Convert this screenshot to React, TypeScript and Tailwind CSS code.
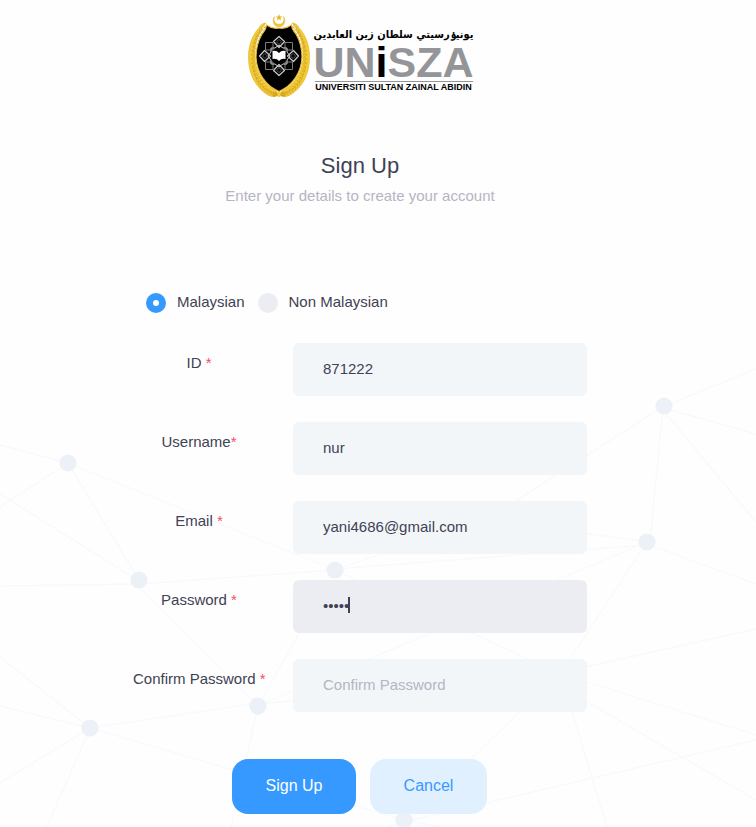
import { useState } from "react";

type Point = [number, number];

const nodes: Point[] = [
  [68, 463], [139, 580], [335, 570], [258, 706], [90, 728], [664, 406], [647, 542], [404, 820],
];

const edges: [Point, Point][] = [
  [[0, 445], [68, 463]], [[0, 507], [68, 463]], [[68, 463], [139, 580]], [[68, 463], [335, 570]],
  [[0, 494], [139, 581]], [[0, 586], [139, 584]], [[139, 584], [335, 570]], [[139, 587], [258, 706]],
  [[258, 706], [335, 570]], [[90, 728], [0, 657]], [[90, 728], [0, 706]], [[90, 728], [0, 783]],
  [[90, 728], [47, 827]], [[90, 728], [258, 703]], [[90, 728], [404, 820]], [[258, 706], [231, 827]],
  [[258, 706], [647, 542]], [[258, 704], [558, 677]], [[335, 570], [558, 673]], [[335, 570], [500, 512]],
  [[335, 569], [647, 545]], [[500, 511], [664, 406]], [[500, 521], [647, 542]], [[558, 677], [647, 542]],
  [[558, 673], [756, 629]], [[558, 673], [756, 735]], [[558, 685], [756, 800]], [[558, 665], [607, 827]],
  [[558, 674], [404, 825]], [[664, 406], [756, 369]], [[664, 408], [756, 434]], [[664, 411], [756, 522]],
  [[663, 406], [650, 542]], [[647, 544], [756, 584]], [[404, 822], [756, 740]], [[404, 820], [440, 827]],
  [[404, 822], [386, 827]],
];

function NetworkBackdrop() {
  return (
    <svg aria-hidden="true" viewBox="0 0 756 827" preserveAspectRatio="xMidYMin slice" className="absolute inset-0 -z-10 size-full">
      <g stroke="#f7f9fb" strokeWidth="1.3">
        {edges.map(([a, b], i) => (
          <line key={i} x1={a[0]} y1={a[1]} x2={b[0]} y2={b[1]} />
        ))}
      </g>
      <g fill="#ecf1f8">
        {nodes.map(([x, y]) => (
          <circle key={x} cx={x} cy={y} r="8.6" />
        ))}
      </g>
    </svg>
  );
}

// Herringbone strokes that run along the left half of the wreath.
const chevrons = Array.from({ length: 22 }, (_, i) => {
  const t = ((122 + i * 6.6) * Math.PI) / 180;
  const x = 31 + 27 * Math.cos(t);
  const y = 45 - 36 * Math.sin(t);
  const heading = (Math.atan2(36 * Math.cos(t), 27 * Math.sin(t)) * 180) / Math.PI;
  return { x, y, heading };
});

function Laurel() {
  return (
    <g>
      <path
        d="M18 10C15 13 13.500 15 12.500 19C8 26 6.500 34 7 46C7.500 60 17 73 28 78L30 82C27 84 24 84 20 82C8 75 1 62 .5 46C0 32 5 21 11 15C12 12 15 10 18 10Z"
        fill="#f2ca36"
        stroke="#e0b226"
        strokeWidth=".6"
      />
      <g stroke="#c99a1a" strokeWidth=".5" fill="none">
        {chevrons.map((c, i) => (
          <path key={i} d="M-2.600 -2L0 .8L2.600 -2M0 .8V-2.500" transform={`translate(${c.x} ${c.y}) rotate(${-c.heading})`} />
        ))}
      </g>
    </g>
  );
}

function Emblem() {
  return (
    <svg viewBox="0 0 64 86" className="h-[86px] w-16 shrink-0" role="img" aria-label="University crest">
      <Laurel />
      <g transform="translate(62 0) scale(-1 1)">
        <Laurel />
      </g>
      <path
        d="M31 15C36 16 40 14.500 43.500 12C44 16 46 19 48 21C52 28 54 36 54 44C53.500 60 44 73 31 78.500C18 73 8.500 60 8 44C8 36 10 28 14 21C16 19 18 16 18.500 12C22 14.500 26 16 31 15Z"
        fill="#000"
        stroke="#e8bc30"
        strokeWidth="1.2"
      />
      <path d="M26.500 3.500C24 7 25 13.800 31 13.800C37 13.800 38 7 35.500 3.500C36.800 8 35 11.200 31 11.200C27 11.200 25.200 8 26.500 3.500Z" fill="#f0c52e" stroke="#e6b828" strokeWidth=".5" />
      <path d="M31 1L31.900 3.400L34.400 3.500L32.400 5.100L33.100 7.500L31 6.100L28.900 7.500L29.600 5.100L27.600 3.500L30.100 3.400Z" fill="#e8b420" />
      <path d="M25 83L37 79.500M37 83L25 79.500" stroke="#d6a51c" strokeWidth="2.200" />
      <rect x="29.500" y="79" width="3" height="5" fill="#f3d04a" />
      <g fill="none" strokeLinejoin="round" transform="translate(31 43)">
        {[0, 90, 180, 270].map((a) => (
          <g key={a} transform={`rotate(${a})`}>
            <path d="M6 -13.500H13.500V-6H6Z" stroke="#7d7d7d" strokeWidth="1" />
            <path d="M0 -19.500L5.500 -14.500L0 -8.500L-5.500 -14.500Z" stroke="#c8c8c8" strokeWidth="1.200" />
            <path d="M0 -16.500L2.500 -14.300L0 -11.500L-2.500 -14.300Z" stroke="#666" strokeWidth=".8" />
          </g>
        ))}
        <path d="M0 -11L4 -8H8V-4L11 0L8 4V8H4L0 11L-4 8H-8V4L-11 0L-8 -4V-8H-4Z" stroke="#c9c9c9" strokeWidth="1" />
      </g>
      <path d="M24.500 38Q28.500 37 31 40Q33.500 37 37.500 38V46Q33.500 45 31 48Q28.500 45 24.500 46Z" fill="#fff" />
    </svg>
  );
}

function Logo() {
  return (
    <div className="flex h-[86px] items-start gap-[3px]">
      <Emblem />
      <div className="flex w-[158px] flex-col items-center pt-[13px] text-center">
        <span lang="ms-Arab" dir="rtl" className="h-[18px] font-['DejaVu_Sans_Condensed','DejaVu_Sans',sans-serif] text-[11px] leading-[18px] font-bold whitespace-nowrap text-black">
          يونيۏرسيتي سلطان زين العابدين
        </span>
        <span className="h-[37px] font-['Liberation_Sans',sans-serif] text-[43px] leading-[37px] font-bold whitespace-nowrap text-[#949599]">
          UN<span className="text-black">i</span>SZA
        </span>
        <span className="w-full border-t border-[#949599]" />
        <span className="font-['Liberation_Sans',sans-serif] text-[9px] leading-[10px] font-bold whitespace-nowrap text-black">
          UNIVERSITI SULTAN ZAINAL ABIDIN
        </span>
      </div>
    </div>
  );
}

interface FieldProps {
  id: string;
  label: string;
  type?: string;
  value?: string;
  placeholder?: string;
  tight?: boolean;
  active?: boolean;
}

function Field({ id, label, type = "text", value = "", placeholder, tight, active }: FieldProps) {
  const [text, setText] = useState(value);
  return (
    <div className="grid grid-cols-[132px_1fr] gap-7">
      <label htmlFor={id} className="pt-[9px] text-center leading-[22px] whitespace-nowrap">
        {label}
        {tight ? "" : " "}
        <span className="text-[#f64e60]">*</span>
      </label>
      <div className="relative">
        <input
          id={id}
          type={type}
          value={text}
          placeholder={placeholder}
          onChange={(e) => setText(e.target.value)}
          className={`h-[53px] w-full rounded-md px-[30px] pb-[3px] outline-none placeholder:text-[#b5b5c3] ${active ? "bg-[#ebedf3]" : "bg-[#f3f6f9]"}`}
        />
        {active && <span aria-hidden="true" className="absolute top-[17px] left-[55px] h-4 w-[2px] bg-[#3f4254]" />}
      </div>
    </div>
  );
}

function Nationality({ label, checked, onSelect }: { label: string; checked: boolean; onSelect: () => void }) {
  return (
    <label className="flex items-center gap-[11px]">
      <input
        type="radio"
        name="nationality"
        checked={checked}
        onChange={onSelect}
        className="size-5 appearance-none rounded-full bg-[#ebedf3] checked:border-[7px] checked:border-[#3699ff] checked:bg-white"
      />
      <span className="pb-[2px]">{label}</span>
    </label>
  );
}

export default function App() {
  const [nationality, setNationality] = useState("Malaysian");
  return (
    <main className="relative isolate min-h-screen overflow-hidden bg-[#fefefe] pt-[13px] pr-9 pb-3 font-['Liberation_Sans',Arial,sans-serif] text-[15px] text-[#3f4254]">
      <NetworkBackdrop />
      <div className="mx-auto flex max-w-[454px] flex-col items-center">
        <Logo />
        <h1 className="mt-[51px] text-[22px] leading-8">Sign Up</h1>
        <p className="mt-[2px] leading-6 text-[#b5b5c3]">Enter your details to create your account</p>
        <form className="mt-[82px] w-full" onSubmit={(e) => e.preventDefault()}>
          <fieldset className="flex gap-[13px] pl-[13px] leading-6">
            {["Malaysian", "Non Malaysian"].map((n) => (
              <Nationality key={n} label={n} checked={nationality === n} onSelect={() => setNationality(n)} />
            ))}
          </fieldset>
          <div className="mt-[27px] flex flex-col gap-[26px]">
            <Field id="ic" label="ID" value="871222" />
            <Field id="username" label="Username" value="nur" tight />
            <Field id="email" label="Email" type="email" value="yani4686@gmail.com" />
            <Field id="password" label="Password" type="password" value="12345" active />
            <Field id="confirm" label="Confirm Password" type="password" placeholder="Confirm Password" />
          </div>
          <div className="mt-[47px] flex justify-center gap-[14px] pr-px text-base">
            <button type="submit" className="h-[55px] w-[124px] rounded-2xl bg-[#3699ff] pb-[2px] text-white">Sign Up</button>
            <button type="button" className="h-[55px] w-[117px] rounded-2xl bg-[#e1f0ff] pb-[2px] text-[#3699ff]">Cancel</button>
          </div>
        </form>
      </div>
    </main>
  );
}
